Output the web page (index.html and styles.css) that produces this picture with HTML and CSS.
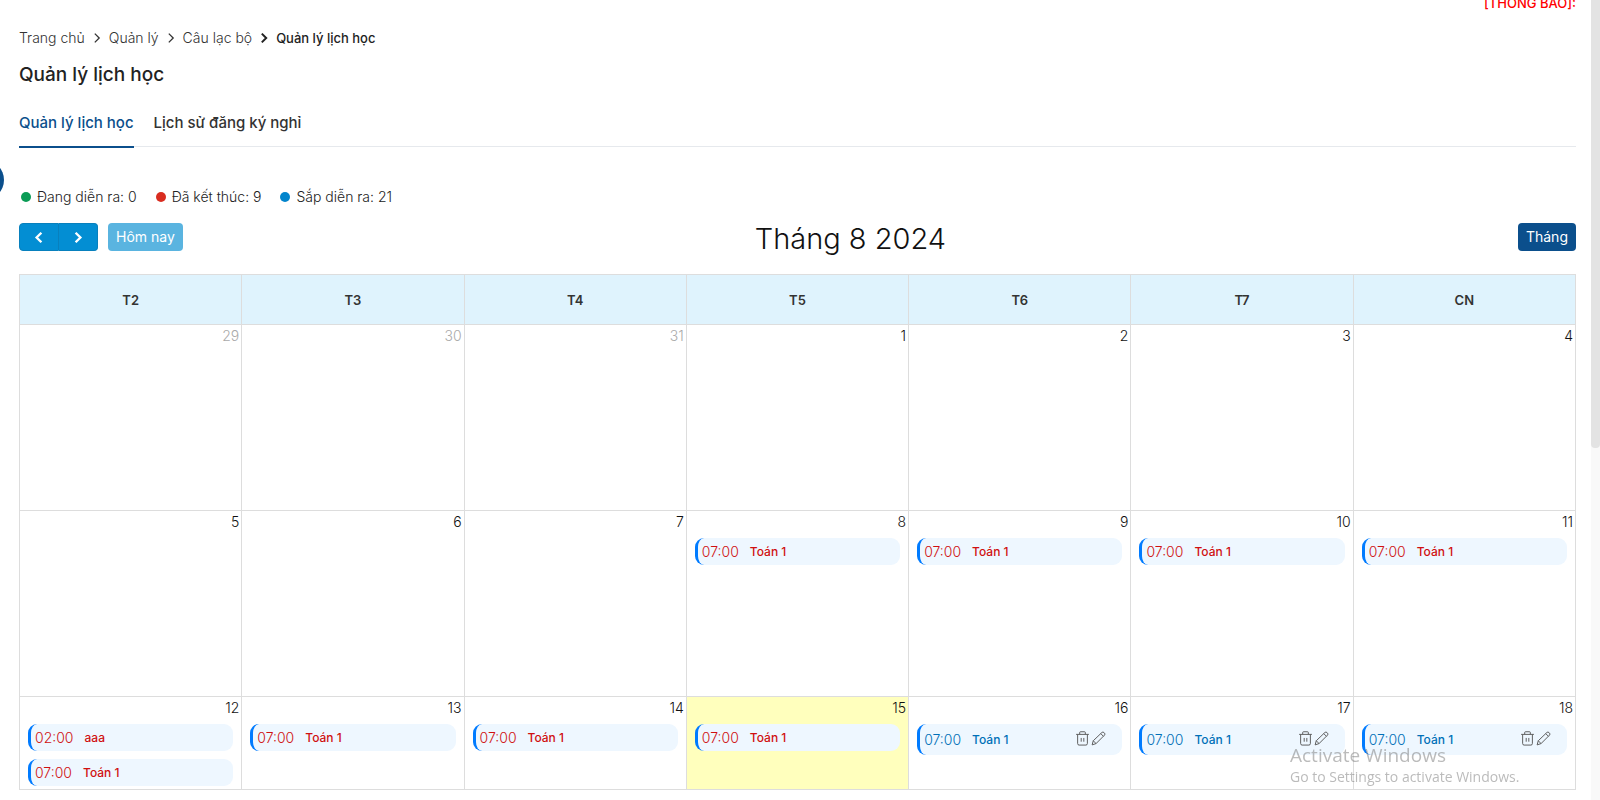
FILE: index.html
```html
<!DOCTYPE html>
<html lang="vi">
<head>
<meta charset="utf-8">
<meta name="viewport" content="width=device-width, initial-scale=1">
<title>Quản lý lịch học</title>
<link rel="stylesheet" href="styles.css">
</head>
<body>
<svg class="sprite" aria-hidden="true">
  <symbol id="trash" viewBox="0 0 16 16"><path d="M1.2 3.6h13.6M5 3.4V1.6q0-.8.8-.8h4.4q.8 0 .8.8v1.8M2.8 3.8v9.6q0 1.6 1.6 1.6h7.2q1.6 0 1.6-1.6V3.8M6.6 7.4v4M9.4 7.4v4"/></symbol>
  <symbol id="pencil" viewBox="0 0 16 16"><path d="M1.2 14.8l1.2-4.4L11.6 1.6q1.1-1 2.2 0l.6.6q1 1.1 0 2.2L5.4 13.4zM10.4 2.8l2.9 2.9M2.4 10.4l3 3"/></symbol>
  <symbol id="chevron" viewBox="0 0 8 12"><path d="M1.8 1.6L6.2 6l-4.4 4.4"/></symbol>
</svg>
<div class="notice"><span>[THÔNG BÁO]:</span></div>
<button class="drawer" type="button" aria-label="Menu"></button>
<main class="page">
  <nav class="crumbs">
    <a href="#">Trang chủ</a><svg><use href="#chevron"/></svg>
    <a href="#">Quản lý</a><svg><use href="#chevron"/></svg>
    <a href="#">Câu lạc bộ</a><svg class="strong"><use href="#chevron"/></svg>
    <a href="#" class="current">Quản lý lịch học</a>
  </nav>
  <h1 class="title">Quản lý lịch học</h1>
  <nav class="tabs">
    <a href="#" class="tab active">Quản lý lịch học</a>
    <a href="#" class="tab">Lịch sử đăng ký nghỉ</a>
  </nav>
  <ul class="legend">
    <li class="ongoing">Đang diễn ra: 0</li>
    <li class="finished">Đã kết thúc: 9</li>
    <li class="upcoming">Sắp diễn ra: 21</li>
  </ul>
  <div class="toolbar">
    <div class="tools">
      <div class="pager">
        <button type="button" aria-label="Trước"><svg class="flip"><use href="#chevron"/></svg></button>
        <button type="button" aria-label="Sau"><svg><use href="#chevron"/></svg></button>
      </div>
      <button type="button" class="btn today-btn">Hôm nay</button>
    </div>
    <h2 class="month">Tháng 8 2024</h2>
    <div class="tools"><button type="button" class="btn view-btn">Tháng</button></div>
  </div>
  <table class="calendar">
    <thead>
      <tr><th>T2</th><th>T3</th><th>T4</th><th>T5</th><th>T6</th><th>T7</th><th>CN</th></tr>
    </thead>
    <tbody>
      <tr class="week">
        <td class="other"><span class="day">29</span></td>
        <td class="other"><span class="day">30</span></td>
        <td class="other"><span class="day">31</span></td>
        <td><span class="day">1</span></td>
        <td><span class="day">2</span></td>
        <td><span class="day">3</span></td>
        <td><span class="day">4</span></td>
      </tr>
      <tr class="week">
        <td><span class="day">5</span></td>
        <td><span class="day">6</span></td>
        <td><span class="day">7</span></td>
        <td><span class="day">8</span><div class="event"><time>07:00</time><b>Toán 1</b></div></td>
        <td><span class="day">9</span><div class="event"><time>07:00</time><b>Toán 1</b></div></td>
        <td><span class="day">10</span><div class="event"><time>07:00</time><b>Toán 1</b></div></td>
        <td><span class="day">11</span><div class="event"><time>07:00</time><b>Toán 1</b></div></td>
      </tr>
      <tr class="week last">
        <td><span class="day">12</span><div class="event"><time>02:00</time><b>aaa</b></div><div class="event"><time>07:00</time><b>Toán 1</b></div></td>
        <td><span class="day">13</span><div class="event"><time>07:00</time><b>Toán 1</b></div></td>
        <td><span class="day">14</span><div class="event"><time>07:00</time><b>Toán 1</b></div></td>
        <td class="today"><span class="day">15</span><div class="event"><time>07:00</time><b>Toán 1</b></div></td>
        <td><span class="day">16</span><div class="event next"><time>07:00</time><b>Toán 1</b><span class="actions"><button type="button" aria-label="Xóa"><svg><use href="#trash"/></svg></button><button type="button" aria-label="Sửa"><svg><use href="#pencil"/></svg></button></span></div></td>
        <td><span class="day">17</span><div class="event next"><time>07:00</time><b>Toán 1</b><span class="actions"><button type="button" aria-label="Xóa"><svg><use href="#trash"/></svg></button><button type="button" aria-label="Sửa"><svg><use href="#pencil"/></svg></button></span></div></td>
        <td><span class="day">18</span><div class="event next"><time>07:00</time><b>Toán 1</b><span class="actions"><button type="button" aria-label="Xóa"><svg><use href="#trash"/></svg></button><button type="button" aria-label="Sửa"><svg><use href="#pencil"/></svg></button></span></div></td>
      </tr>
    </tbody>
  </table>
</main>
<div class="watermark"><p class="big">Activate Windows</p><p>Go to Settings to activate Windows.</p></div>
<div class="scrollbar"><div class="thumb"></div></div>
</body>
</html>
```
FILE: styles.css
```css
* { box-sizing: border-box; }
body {
  margin: 0;
  background: #fff;
  color: #212529;
  font: 300 14px/20px Inter, "Noto Sans", sans-serif;
}
a { color: inherit; text-decoration: none; }
button { font: inherit; border: 0; padding: 0; cursor: pointer; }
svg { fill: none; stroke: currentColor; }
.sprite { display: none; }

.notice {
  display: flex;
  align-items: flex-end;
  justify-content: flex-end;
  height: 13px;
  margin: 0 24px 0 19px;
  overflow: hidden;
  color: #f00;
  font-size: 13px;
  font-weight: 500;
}
.drawer {
  position: fixed;
  left: -36px;
  top: 160px;
  width: 40px;
  height: 40px;
  border-radius: 50%;
  background: #0b4f8c;
}
.page { padding: 15px 24px 12px 19px; }

.crumbs { display: flex; align-items: center; gap: 8px; color: #333; }
.crumbs svg { width: 8px; height: 12px; stroke-width: 1.3; }
.crumbs .strong { color: #222; stroke-width: 2; }
.crumbs .current { color: #222; font-size: 13px; font-weight: 500; }

.title { margin: 12px 0 0; font-size: 19px; line-height: 30px; font-weight: 500; color: #222; }

.tabs { display: flex; gap: 20px; margin-top: 20px; border-bottom: 1px solid #e6e9ed; }
.tab { padding: 1px 0 11px; margin-bottom: -2px; font-size: 15px; line-height: 24px; font-weight: 500; border-bottom: 2px solid transparent; color: #333; }
.tab.active { color: #0b4f8c; border-color: #0b4f8c; }

.legend { display: flex; gap: 19px; margin: 40px 0 0; padding: 0 0 0 2px; list-style: none; color: #222; }
.legend li { display: flex; align-items: center; gap: 6px; }
.legend li::before { content: ""; width: 10px; height: 10px; border-radius: 50%; background: currentColor; }
.legend .ongoing::before { background: #0a9b55; }
.legend .finished::before { background: #d92d20; }
.legend .upcoming::before { background: #0284cc; }

.toolbar { display: flex; align-items: center; justify-content: space-between; margin-top: 12px; height: 40px; }
.tools { display: flex; gap: 10px; align-self: flex-start; padding-top: 4px; }
.pager { display: flex; }
.pager button { display: flex; align-items: center; justify-content: center; width: 40px; height: 28px; background: #038ed3; color: #fff; border: 1px solid #0880bd; border-radius: 4px 0 0 4px; }
.pager button + button { width: 39px; border-left: 0; border-radius: 0 4px 4px 0; }
.pager svg { width: 10px; height: 13px; stroke-width: 2.2; }
.flip { transform: scaleX(-1); }
.btn { height: 28px; padding: 0 8px; border-radius: 4px; color: #fff; font-weight: 400; }
.today-btn { background: #5ab4e0; }
.view-btn { background: #0b4f8c; }
.month { margin: 0; font-size: 29px; line-height: 40px; font-weight: 300; color: #111; }

.calendar { width: 100%; margin-top: 15px; table-layout: fixed; border-collapse: collapse; }
.calendar th, .calendar td { border: 1px solid #ddd; padding: 0; }
.calendar th { height: 50px; background: #dff3fd; font-size: 13px; font-weight: 600; color: #333; }
.week { height: 186px; }
.week.last { height: 93px; }
.calendar td { vertical-align: top; }
.day { display: block; padding: 1px 2px 5px; text-align: right; color: #111; }
.other .day { color: #aaa; }
.calendar .today { background: #ffffbd; }

.event {
  display: flex;
  align-items: center;
  height: 27px;
  margin: 1px 8px 0;
  padding-left: 4px;
  border-left: 3px solid #007bff;
  border-radius: 9px;
  background: #eef7ff;
  color: #d01010;
}
.event + .event { margin: 8px 8px 3px; }
.event.next { height: 31px; color: #0070b8; }
.event b { margin-left: 11px; font-size: 12px; font-weight: 500; }
.actions { display: flex; gap: 1px; margin-left: auto; padding: 0 16px 2px 0; color: #555; }
.actions button { display: flex; background: none; color: inherit; }
.actions svg { width: 15px; height: 15px; }

.watermark { position: fixed; left: 1290px; bottom: 13px; color: rgba(120, 120, 120, .5); font-family: "Open Sans", "Noto Sans", sans-serif; font-weight: 400; pointer-events: none; }
.watermark p { margin: 0; }
.watermark .big { font-size: 19px; line-height: 24px; }

.scrollbar { position: fixed; top: 0; right: 0; bottom: 0; width: 9px; background: #f9f9f9; }
.thumb { height: 56%; background: #e3e3e3; border-radius: 0 0 4px 4px; }
```
